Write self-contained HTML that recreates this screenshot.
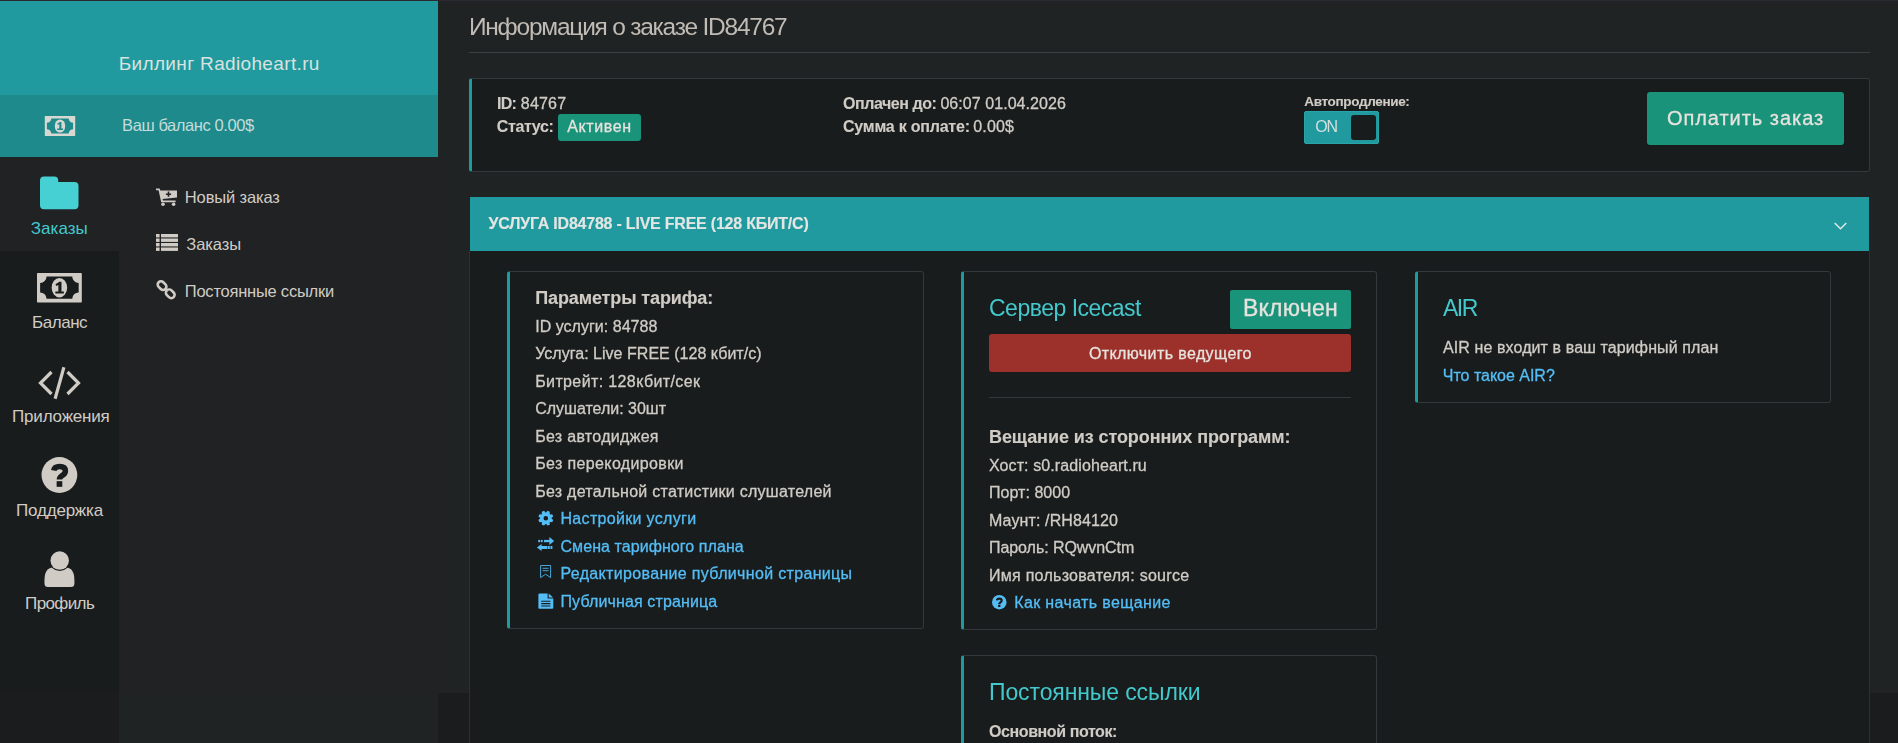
<!DOCTYPE html>
<html lang="ru"><head><meta charset="utf-8"><title>Информация о заказе ID84767</title>
<style>
html,body{margin:0;padding:0}
body{background:#1b1c1e;font-family:"Liberation Sans", Arial, sans-serif;color:#d0ccc5;width:1898px;height:743px;overflow:hidden;position:relative}
.b{position:absolute;box-sizing:border-box;display:block}
.t{position:absolute;white-space:nowrap;display:block}
a.t{text-decoration:none}
.card{border:1px solid #33383a;border-left:3px solid #209a9e;border-radius:3px;background:#191c1d}
</style></head><body>
<div class="b wrap" style="left:0px;top:0px;width:1898px;height:693px;background:#202324;"></div>
<div class="b " style="left:0px;top:0px;width:1898px;height:1px;background:#2b2a33;"></div>
<nav>
<div class="b " style="left:0px;top:157px;width:119px;height:536px;background:#191c1d;"></div>
<div class="b " style="left:0px;top:693px;width:119px;height:50px;background:#1b1c1e;"></div>
<div class="b " style="left:119px;top:157px;width:319px;height:536px;background:#212224;"></div>
<div class="b " style="left:119px;top:693px;width:319px;height:50px;background:#202324;"></div>
<div class="b " style="left:0px;top:157px;width:119px;height:94px;background:#202224;"></div>
<div class="b " style="left:0px;top:1px;width:438px;height:94px;background:#209a9e;"></div>
<div class="b " style="left:0px;top:95px;width:438px;height:62px;background:#1e8a8c;"></div>
<span class="t " style="left:118.7px;top:54px;font-size:19px;line-height:19px;color:#d9e2df;letter-spacing:0.35px;">Биллинг Radioheart.ru</span>
<span class="t " style="left:122.1px;top:117px;font-size:16.5px;line-height:16.5px;color:#c4dcd9;letter-spacing:-0.42px;">Ваш баланс 0.00$</span>
<svg class="b" style="left:0;top:0" width="1898" height="743" viewBox="0 0 1898 743"><g transform="translate(44.8 116) scale(1.0133 1.0000)"><rect x="0" y="0" width="30" height="20" rx="0.5" fill="#d8d8d2"/><path d="M6.4 2.5 H23.6 A4.3 4.3 0 0 0 27.9 6.8 V13.2 A4.3 4.3 0 0 0 23.6 17.5 H6.4 A4.3 4.3 0 0 0 2.1 13.2 V6.8 A4.3 4.3 0 0 0 6.4 2.5 Z" fill="#1e8a8c"/><ellipse cx="15" cy="10" rx="5.2" ry="6.6" fill="#d8d8d2"/><path d="M12.4 7.6 L15 5.9 H16.4 V12.5 H18 V13.9 H12.3 V12.5 H14.3 V8.1 L12.9 8.9 Z" fill="#1e8a8c"/></g><g transform="translate(40 176.6) scale(1.0000 1.0000)"><path d="M4 0 H14.2 Q18.2 0 18.2 4 V5.4 H34.5 Q38.5 5.4 38.5 9.4 V28.6 Q38.5 32.6 34.5 32.6 H4 Q0 32.6 0 28.6 V4 Q0 0 4 0 Z" fill="#46d0d3"/></g><g transform="translate(37 272.9) scale(1.4933 1.4800)"><rect x="0" y="0" width="30" height="20" rx="0.5" fill="#d0ccc5"/><path d="M6.4 2.5 H23.6 A4.3 4.3 0 0 0 27.9 6.8 V13.2 A4.3 4.3 0 0 0 23.6 17.5 H6.4 A4.3 4.3 0 0 0 2.1 13.2 V6.8 A4.3 4.3 0 0 0 6.4 2.5 Z" fill="#191c1d"/><ellipse cx="15" cy="10" rx="5.2" ry="6.6" fill="#d0ccc5"/><path d="M12.4 7.6 L15 5.9 H16.4 V12.5 H18 V13.9 H12.3 V12.5 H14.3 V8.1 L12.9 8.9 Z" fill="#191c1d"/></g><g transform="translate(38 366) scale(1.0000 1.0000)"><g fill="none" stroke="#d0ccc5" stroke-width="3.2" stroke-linecap="butt" stroke-linejoin="miter"><path d="M13.5 6 L2.5 17 L13.5 28"/><path d="M29.5 6 L40.5 17 L29.5 28"/><path d="M25.9 1.2 L17.1 32.8"/></g></g><g transform="translate(41.5 457.1) scale(0.9944 0.9944)"><circle cx="18" cy="18" r="18" fill="#d0ccc5"/><path d="M12.3 13.4 Q13 9.4 18.2 9.4 Q24 9.4 24 13.9 Q24 16.6 21 18.4 Q18.05 20.2 18.05 22.6" fill="none" stroke="#191c1d" stroke-width="5.6"/><rect x="15.2" y="24.2" width="5.7" height="5.7" fill="#191c1d"/></g><g transform="translate(44.5 551.3) scale(1.0000 1.0000)"><path d="M0 29 Q0 16.6 8.3 16.2 H21.6 Q29.9 16.6 29.9 29 V32.2 Q29.9 35.7 26.4 35.7 H3.5 Q0 35.7 0 32.2 Z" fill="#d0ccc5"/><circle cx="15.2" cy="9.3" r="10.5" fill="#191c1d"/><circle cx="15.2" cy="9.3" r="9.25" fill="#d0ccc5"/></g><g transform="translate(156 188) scale(1.0000 1.0000)"><g fill="#d0ccc5"><path d="M0 0.6 H3.6 L4.3 2.6 H21 V9.4 L6.6 11 L7 12.6 H19.6 V14.2 H5.2 L2.6 2.2 H0 Z"/><circle cx="7" cy="16.2" r="1.8"/><circle cx="17.6" cy="16.2" r="1.8"/></g><path d="M11.7 3.6 H13.3 V5.4 H15.1 V7 H13.3 V8.8 H11.7 V7 H9.9 V5.4 H11.7 Z" fill="#202224"/></g><g transform="translate(156 234) scale(1.0000 1.0000)"><g fill="#d0ccc5"><rect x="0" y="0" width="3.6" height="3.4"/><rect x="5" y="0" width="17" height="3.4"/><rect x="0" y="4.5" width="3.6" height="3.4"/><rect x="5" y="4.5" width="17" height="3.4"/><rect x="0" y="9" width="3.6" height="3.4"/><rect x="5" y="9" width="17" height="3.4"/><rect x="0" y="13.5" width="3.6" height="3.4"/><rect x="5" y="13.5" width="17" height="3.4"/></g></g><g transform="translate(155.95 279.55) scale(1.0000 1.0000)"><g fill="none" stroke="#d0ccc5" stroke-width="2.6"><rect x="-4.8" y="-3.3" width="9.6" height="6.6" rx="3.3" transform="translate(6.1 6.1) rotate(45)"/><rect x="-4.8" y="-3.3" width="9.6" height="6.6" rx="3.3" transform="translate(14.3 14.25) rotate(45)"/></g></g></svg>
<a class="t " style="left:30.8px;top:220px;font-size:17px;line-height:17px;color:#43c9cc;letter-spacing:0.04px;">Заказы</a>
<a class="t " style="left:32.0px;top:314px;font-size:17px;line-height:17px;color:#d0ccc5;letter-spacing:-0.46px;">Баланс</a>
<a class="t " style="left:12.1px;top:408px;font-size:17px;line-height:17px;color:#d0ccc5;letter-spacing:-0.2px;">Приложения</a>
<a class="t " style="left:16.1px;top:502px;font-size:17px;line-height:17px;color:#d0ccc5;letter-spacing:-0.212px;">Поддержка</a>
<a class="t " style="left:25.1px;top:595px;font-size:17px;line-height:17px;color:#d0ccc5;letter-spacing:-0.617px;">Профиль</a>
<a class="t " style="left:184.8px;top:189px;font-size:16.5px;line-height:16.5px;color:#d0ccc5;letter-spacing:-0.13px;">Новый заказ</a>
<a class="t " style="left:186.3px;top:236px;font-size:16.5px;line-height:16.5px;color:#d0ccc5;letter-spacing:-0.08px;">Заказы</a>
<a class="t " style="left:184.8px;top:283px;font-size:16.5px;line-height:16.5px;color:#d0ccc5;letter-spacing:-0.231px;">Постоянные ссылки</a>
</nav>
<main style="will-change:transform;-webkit-text-stroke:0.3px">
<h1 style="margin:0;font-weight:400"><span class="t " style="left:468.9px;top:15px;font-size:24.5px;line-height:24.5px;color:#c0bbb4;letter-spacing:-1.227px;-webkit-text-stroke:0;">Информация о заказе ID84767</span></h1>
<div class="b " style="left:469px;top:52px;width:1401px;height:1px;background:#3b4043;"></div>
<div class="b card" style="left:469px;top:78px;width:1401px;height:94px;"></div>
<span class="t " style="left:497.1px;top:96px;font-size:16px;line-height:16px;color:#d0ccc5;font-weight:700;letter-spacing:-0.75px;-webkit-text-stroke:0.12px;">ID:</span><span class="t " style="left:520.8px;top:96px;font-size:16px;line-height:16px;color:#d0ccc5;letter-spacing:0.2px;">84767</span><span class="t " style="left:496.8px;top:119px;font-size:16px;line-height:16px;color:#d0ccc5;font-weight:700;letter-spacing:-0.367px;-webkit-text-stroke:0.12px;">Статус:</span>
<div class="b " style="left:558px;top:114px;width:83px;height:27px;background:#1a937b;border-radius:3px;"></div>
<span class="t " style="left:567.3px;top:119px;font-size:16px;line-height:16px;color:#e6e3de;letter-spacing:0.608px;">Активен</span>
<span class="t " style="left:843.0px;top:96px;font-size:16px;line-height:16px;color:#d0ccc5;font-weight:700;letter-spacing:-0.45px;-webkit-text-stroke:0.12px;">Оплачен до:</span><span class="t " style="left:940.4px;top:96px;font-size:16px;line-height:16px;color:#d0ccc5;letter-spacing:0.06px;">06:07 01.04.2026</span><span class="t " style="left:843.0px;top:119px;font-size:16px;line-height:16px;color:#d0ccc5;font-weight:700;letter-spacing:-0.221px;-webkit-text-stroke:0.12px;">Сумма к оплате:</span><span class="t " style="left:973.2px;top:119px;font-size:16px;line-height:16px;color:#d0ccc5;letter-spacing:0.175px;">0.00$</span>
<span class="t " style="left:1304.3px;top:95px;font-size:13.5px;line-height:13.5px;color:#d0ccc5;font-weight:700;letter-spacing:-0.338px;-webkit-text-stroke:0.12px;">Автопродление:</span>
<div class="b " style="left:1304px;top:111px;width:75px;height:33px;background:#209a9e;border-radius:2px;border:1px solid #27a5a8;"></div>
<div class="b " style="left:1351px;top:115px;width:25px;height:25px;background:#191c1d;border-radius:3px;"></div>
<span class="t " style="left:1315.2px;top:119px;font-size:16px;line-height:16px;color:#d3dfdd;letter-spacing:-1.2px;-webkit-text-stroke:0;">ON</span>
<div class="b " style="left:1647px;top:92px;width:197px;height:53px;background:#1a937b;border-radius:3px;"></div>
<span class="t " style="left:1666.9px;top:108px;font-size:20px;line-height:20px;color:#e6e3de;letter-spacing:0.962px;">Оплатить заказ</span>
<div class="b " style="left:469px;top:251px;width:1401px;height:500px;background:#191c1d;border-left:1px solid #2c3133;border-right:1px solid #2c3133;"></div>
<div class="b " style="left:470px;top:197px;width:1399px;height:54px;background:#209a9e;"></div>
<span class="t " style="left:488.5px;top:216px;font-size:16px;line-height:16px;color:#e4e6e3;font-weight:700;letter-spacing:-0.218px;-webkit-text-stroke:0.12px;">УСЛУГА ID84788 - LIVE FREE (128 КБИТ/С)</span>
<div class="b card" style="left:507px;top:271px;width:417px;height:358px;"></div>
<div class="b card" style="left:961px;top:271px;width:416px;height:359px;"></div>
<div class="b card" style="left:1415px;top:271px;width:416px;height:132px;"></div>
<div class="b card" style="left:961px;top:655px;width:416px;height:120px;"></div>
<span class="t " style="left:535.2px;top:289px;font-size:18px;line-height:18px;color:#d0ccc5;font-weight:700;letter-spacing:-0.113px;-webkit-text-stroke:0.12px;">Параметры тарифа:</span>
<span class="t " style="left:535.2px;top:319px;font-size:16px;line-height:16px;color:#d0ccc5;letter-spacing:0.027px;">ID услуги: 84788</span>
<span class="t " style="left:535.2px;top:346px;font-size:16px;line-height:16px;color:#d0ccc5;letter-spacing:0.024px;">Услуга: Live FREE (128 кбит/с)</span>
<span class="t " style="left:535.2px;top:374px;font-size:16px;line-height:16px;color:#d0ccc5;letter-spacing:0.379px;">Битрейт: 128кбит/сек</span>
<span class="t " style="left:535.2px;top:401px;font-size:16px;line-height:16px;color:#d0ccc5;letter-spacing:-0.007px;">Слушатели: 30шт</span>
<span class="t " style="left:535.2px;top:429px;font-size:16px;line-height:16px;color:#d0ccc5;letter-spacing:0.3px;">Без автодиджея</span>
<span class="t " style="left:535.2px;top:456px;font-size:16px;line-height:16px;color:#d0ccc5;letter-spacing:0.369px;">Без перекодировки</span>
<span class="t " style="left:535.2px;top:484px;font-size:16px;line-height:16px;color:#d0ccc5;letter-spacing:0.262px;">Без детальной статистики слушателей</span>
<a class="t " style="left:560.5px;top:511px;font-size:16px;line-height:16px;color:#54bdf6;letter-spacing:0.32px;">Настройки услуги</a>
<a class="t " style="left:560.5px;top:539px;font-size:16px;line-height:16px;color:#54bdf6;letter-spacing:0.065px;">Смена тарифного плана</a>
<a class="t " style="left:560.5px;top:566px;font-size:16px;line-height:16px;color:#54bdf6;letter-spacing:0.334px;">Редактирование публичной страницы</a>
<a class="t " style="left:560.5px;top:594px;font-size:16px;line-height:16px;color:#54bdf6;letter-spacing:0.124px;">Публичная страница</a>
<span class="t " style="left:989.0px;top:297px;font-size:23px;line-height:23px;color:#43c9cc;letter-spacing:-0.5px;-webkit-text-stroke:0;">Сервер Icecast</span>
<div class="b " style="left:1230px;top:290px;width:121px;height:39px;background:#1a937b;border-radius:2px;"></div>
<span class="t " style="left:1242.9px;top:297px;font-size:23px;line-height:23px;color:#e6e3de;letter-spacing:0.267px;">Включен</span>
<div class="b " style="left:989px;top:334px;width:362px;height:38px;background:#9c302a;border-radius:3px;"></div>
<span class="t " style="left:1088.9px;top:346px;font-size:16px;line-height:16px;color:#e6e3de;letter-spacing:0.4px;">Отключить ведущего</span>
<div class="b " style="left:989px;top:397px;width:362px;height:1px;background:#33383a;"></div>
<span class="t " style="left:989.0px;top:428px;font-size:18px;line-height:18px;color:#d0ccc5;font-weight:700;letter-spacing:-0.079px;-webkit-text-stroke:0.12px;">Вещание из сторонних программ:</span>
<span class="t " style="left:989.0px;top:458px;font-size:16px;line-height:16px;color:#d0ccc5;letter-spacing:0.1px;">Хост: s0.radioheart.ru</span>
<span class="t " style="left:989.0px;top:485px;font-size:16px;line-height:16px;color:#d0ccc5;letter-spacing:0.044px;">Порт: 8000</span>
<span class="t " style="left:989.0px;top:513px;font-size:16px;line-height:16px;color:#d0ccc5;letter-spacing:0.114px;">Маунт: /RH84120</span>
<span class="t " style="left:989.0px;top:540px;font-size:16px;line-height:16px;color:#d0ccc5;letter-spacing:-0.06px;">Пароль: RQwvnCtm</span>
<span class="t " style="left:989.0px;top:568px;font-size:16px;line-height:16px;color:#d0ccc5;letter-spacing:0.27px;">Имя пользователя: source</span>
<a class="t " style="left:1014.2px;top:595px;font-size:16px;line-height:16px;color:#54bdf6;letter-spacing:0.371px;">Как начать вещание</a>
<span class="t " style="left:1443.0px;top:297px;font-size:23px;line-height:23px;color:#43c9cc;letter-spacing:-1.5px;-webkit-text-stroke:0;">AIR</span><span class="t " style="left:1443.0px;top:340px;font-size:16px;line-height:16px;color:#d0ccc5;letter-spacing:0.097px;">AIR не входит в ваш тарифный план</span><a class="t " style="left:1442.8px;top:368px;font-size:16px;line-height:16px;color:#54bdf6;letter-spacing:-0.015px;">Что такое AIR?</a>
<span class="t " style="left:989.0px;top:681px;font-size:23px;line-height:23px;color:#43c9cc;letter-spacing:-0.112px;-webkit-text-stroke:0;">Постоянные ссылки</span><span class="t " style="left:989.0px;top:724px;font-size:16px;line-height:16px;color:#d0ccc5;font-weight:700;letter-spacing:-0.407px;-webkit-text-stroke:0.12px;">Основной поток:</span>
<svg class="b" style="left:0;top:0" width="1898" height="743" viewBox="0 0 1898 743"><g transform="translate(1833.5 221.6) scale(1.0000 1.0000)"><path d="M1.2 1.4 L7 7.2 L12.8 1.4" fill="none" stroke="#dfe7e5" stroke-width="1.5" stroke-linecap="butt" stroke-linejoin="miter"/></g><g transform="translate(992.0 594.95) scale(0.4028 0.4028)"><circle cx="18" cy="18" r="18" fill="#54bdf6"/><path d="M12.3 13.4 Q13 9.4 18.2 9.4 Q24 9.4 24 13.9 Q24 16.6 21 18.4 Q18.05 20.2 18.05 22.6" fill="none" stroke="#191c1d" stroke-width="5.6"/><rect x="15.2" y="24.2" width="5.7" height="5.7" fill="#191c1d"/></g><path d="M553.21 519.88 L552.23 522.25 L550.13 522.02 L549.62 522.53 L549.85 524.63 L547.48 525.61 L546.16 523.96 L545.44 523.96 L544.12 525.61 L541.75 524.63 L541.98 522.53 L541.47 522.02 L539.37 522.25 L538.39 519.88 L540.04 518.56 L540.04 517.84 L538.39 516.52 L539.37 514.15 L541.47 514.38 L541.98 513.87 L541.75 511.77 L544.12 510.79 L545.44 512.44 L546.16 512.44 L547.48 510.79 L549.85 511.77 L549.62 513.87 L550.13 514.38 L552.23 514.15 L553.21 516.52 L551.56 517.84 L551.56 518.56 Z M548.10 518.20 A2.30 2.30 0 1 0 543.50 518.20 A2.30 2.30 0 1 0 548.10 518.20 Z" fill="#54bdf6" fill-rule="evenodd"/><g fill="#54bdf6"><rect x="538.2" y="539.9" width="1.9" height="2.3"/><rect x="540.8" y="539.9" width="1.9" height="2.3"/><rect x="544" y="539.9" width="6" height="2.3"/><path d="M549.4 536.9 L554.1 541 L549.4 545 Z"/><path d="M541.6 544.1 L536.9 547.5 L541.6 551 Z"/><rect x="541" y="546" width="6.4" height="3"/><rect x="547.9" y="546" width="1.9" height="3"/><rect x="550.5" y="546" width="1.9" height="3"/></g><g fill="none" stroke="#4aa6da" stroke-width="1"><path d="M540.6 565.5 H550.6 V577.6 L545.6 574.2 L540.6 577.6 Z"/><path d="M542.6 568.3 H548.6 M542.6 570.7 H548.6"/></g><path d="M539.4 593.4 H547.6 V598.6 H553.3 V607.7 Q553.3 608.7 552.3 608.7 H539.4 Q538.4 608.7 538.4 607.7 V594.4 Q538.4 593.4 539.4 593.4 Z M548.7 593.6 L553.1 597.6 H548.7 Z" fill="#54bdf6"/><path d="M541.2 601.2 H550.4 M541.2 603.6 H550.4 M541.2 606 H550.4" stroke="#191c1d" stroke-width="1.1"/></svg>
</main>
</body></html>
